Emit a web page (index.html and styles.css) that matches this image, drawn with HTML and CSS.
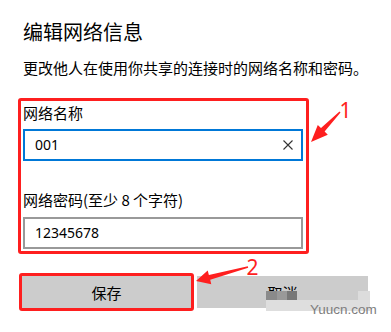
FILE: index.html
```html
<!doctype html>
<html>
  <head>
    <meta charset="utf-8">
    <title>编辑网络信息</title>
    <link rel="stylesheet" href="styles.css">
  </head>
  <body>
    <h1 class="title">编辑网络信息</h1>
    <p class="desc">更改他人在使用你共享的连接时的网络名称和密码。</p>

    <div class="group">
      <div class="label">网络名称</div>
      <div class="field active">
        <span class="value">001</span>
        <svg class="clear" width="10" height="10" viewBox="0 0 10 10">
          <path d="M0.5 0.5 L9.5 9.5 M9.5 0.5 L0.5 9.5" stroke="#333" stroke-width="1.1" fill="none"/>
        </svg>
      </div>
      <div class="label second">网络密码(至少 8 个字符)</div>
      <div class="field plain">
        <span class="value">12345678</span>
      </div>
    </div>

    <div class="actions">
      <div class="mark">
        <button class="btn save">保存</button>
      </div>
      <button class="btn cancel">取消</button>
    </div>

    <div class="wm">
      <div class="wm-tiles">
        <span class="tile t1"></span>
        <span class="tile t2"></span>
        <span class="tile t3"></span>
        <span class="tile-gap"></span>
        <span class="tile t4"></span>
      </div>
      <div class="wm-band"></div>
    </div>
    <div class="wm-text">Yuucn.com</div>

    <svg class="notes" width="391" height="332" viewBox="0 0 391 332">
      <polygon fill="#fe1f1f" points="340.5,112.5 324.6,131.5 327.8,134.7 311,142 317.8,124.9 321,128.1 339.5,111.5"/>
      <polygon fill="#fe1f1f" points="248.2,267.7 210.2,279.8 211.3,284.2 196,281 207.7,270.6 208.9,275 247.8,266.3"/>
      <text x="345.5" y="118" class="num" text-anchor="middle">1</text>
      <text x="252.5" y="275" class="num" text-anchor="middle">2</text>
    </svg>
  </body>
</html>
```

FILE: styles.css
```css
html, body {margin:0;background:#fff;}
body {position:relative;width:391px;height:332px;overflow:hidden;padding:0 0 0 23px;box-sizing:border-box;
  font-family:"Noto Sans CJK SC", "Noto Sans", sans-serif;color:#000;}

.title {margin:18px 0 0;font-size:20px;line-height:28px;font-weight:400;}
.desc {margin:11px 0 0;font-size:15px;line-height:22px;}

.group {margin:19px 0 0 -5px;width:291px;box-sizing:border-box;border:3px solid #fe1f1f;border-radius:3px;
  padding:2px 0 2px 2px;}
.label {font-size:15px;line-height:20px;}
.label.second {margin-top:29px;}
.field {width:280px;height:32px;box-sizing:border-box;border:2px solid #999;display:flex;align-items:center;
  justify-content:space-between;padding:0 8px 0 10px;margin-top:7px;}
.field.active {border-color:#0078d7;margin-top:6px;}
.value {font-family:"Noto Sans", sans-serif;font-size:14px;line-height:20px;}

.actions {display:flex;align-items:center;gap:3px;margin:19px 0 0 -4px;}
.mark {border:3px solid #fe1f1f;border-radius:3px;display:flex;}
.btn {border:0;margin:0;padding:0;height:32px;background:#ccc;font-family:"Noto Sans CJK SC", sans-serif;
  font-size:15px;color:#000;}
.save {width:169px;}
.cancel {width:171px;}

.wm {position:absolute;left:266px;top:291px;width:104px;}
.wm-tiles {display:flex;height:9px;}
.tile {display:block;height:9px;}
.t1 {width:11px;background:#8a8a8a;}
.t2 {width:10px;background:#999;}
.t3 {width:10px;background:#787878;}
.tile-gap {flex:1;}
.t4 {width:12px;background:#dcdcdc;}
.wm-band {height:11px;background:#dedede;}
.wm-text {position:absolute;left:310px;top:302px;font-family:"Liberation Sans", sans-serif;font-size:13.5px;
  line-height:16px;color:#7d7d7d;}

.notes {position:absolute;left:0;top:0;pointer-events:none;}
.num {font-family:"Noto Sans", sans-serif;font-size:21px;fill:#fe1f1f;}
```
